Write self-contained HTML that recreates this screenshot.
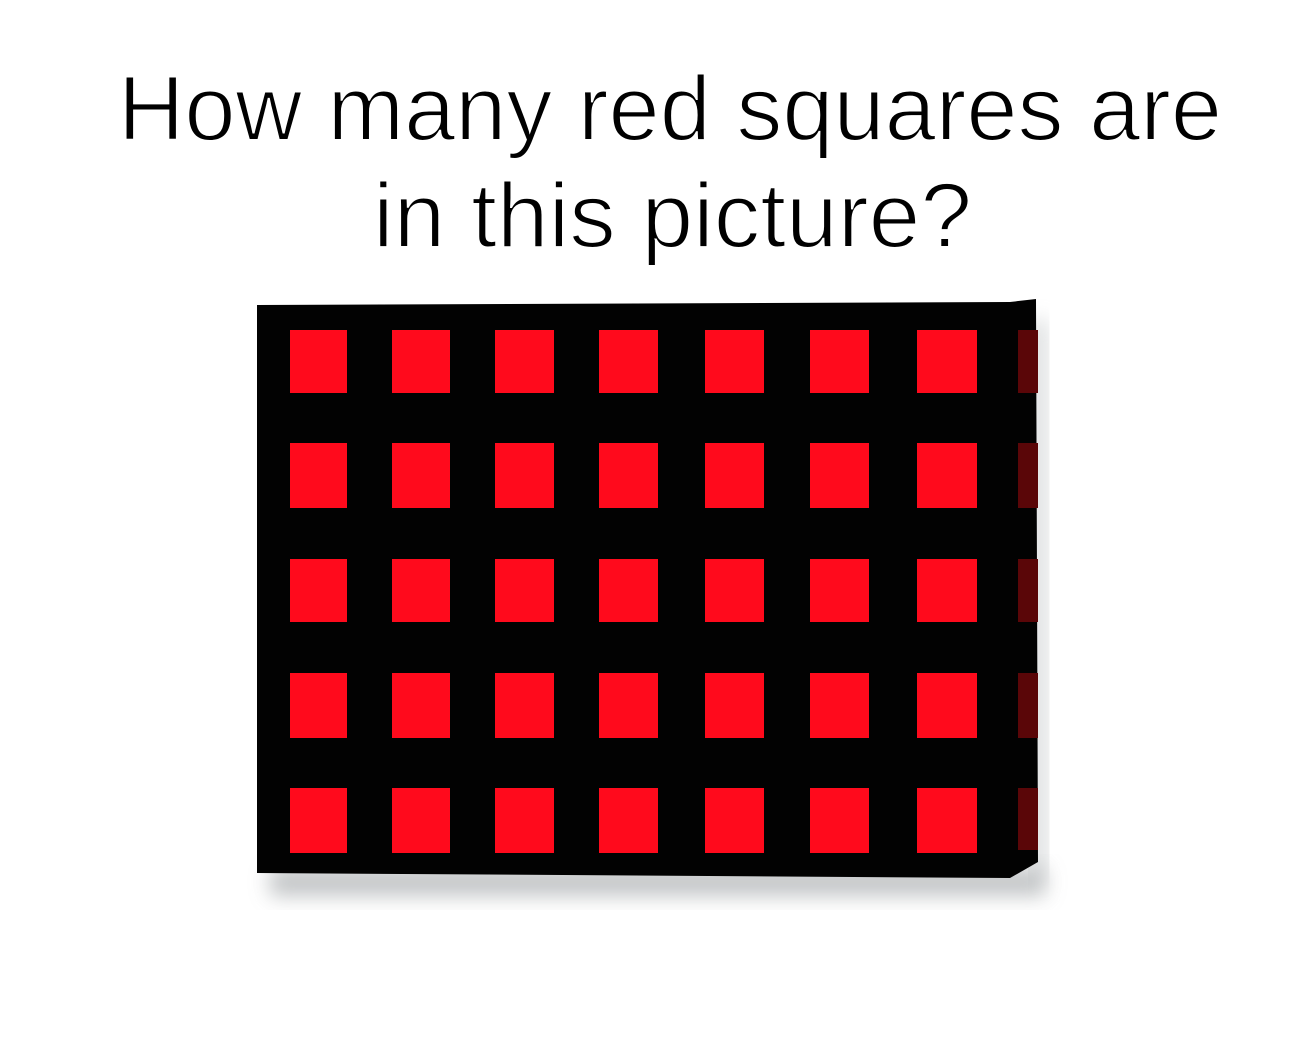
<!DOCTYPE html>
<html><head><style>
html,body{margin:0;padding:0;background:#fff;width:1297px;height:1046px;overflow:hidden}
</style></head><body>
<svg width="1297" height="1046" viewBox="0 0 1297 1046" xmlns="http://www.w3.org/2000/svg">
<defs>
<filter id="sh" x="-10%" y="-50%" width="130%" height="200%"><feGaussianBlur stdDeviation="10"/></filter>
</defs>
<g font-family="Liberation Sans, Arial, sans-serif" font-size="92" fill="#000" stroke="#fff" stroke-width="2">
<text x="118" y="140" textLength="1104" lengthAdjust="spacingAndGlyphs">How many red squares are</text>
<text x="373" y="247" textLength="599" lengthAdjust="spacingAndGlyphs">in this picture?</text>
</g>
<rect x="270" y="868" width="775" height="28" fill="#a8acae" filter="url(#sh)" opacity="0.7"/>
<rect x="1030" y="320" width="16" height="560" fill="#b8bcbe" filter="url(#sh)" opacity="0.6"/>
<polygon points="257,305 1010,302 1036,299 1038,862 1010,878 257,873" fill="#020202"/>
<g fill="#ff0a1c">
<rect x="290" y="330" width="57" height="63"/><rect x="392" y="330" width="58" height="63"/><rect x="495" y="330" width="59" height="63"/><rect x="599" y="330" width="59" height="63"/><rect x="705" y="330" width="59" height="63"/><rect x="810" y="330" width="59" height="63"/><rect x="917" y="330" width="60" height="63"/>
<rect x="290" y="443" width="57" height="65"/><rect x="392" y="443" width="58" height="65"/><rect x="495" y="443" width="59" height="65"/><rect x="599" y="443" width="59" height="65"/><rect x="705" y="443" width="59" height="65"/><rect x="810" y="443" width="59" height="65"/><rect x="917" y="443" width="60" height="65"/>
<rect x="290" y="559" width="57" height="63"/><rect x="392" y="559" width="58" height="63"/><rect x="495" y="559" width="59" height="63"/><rect x="599" y="559" width="59" height="63"/><rect x="705" y="559" width="59" height="63"/><rect x="810" y="559" width="59" height="63"/><rect x="917" y="559" width="60" height="63"/>
<rect x="290" y="673" width="57" height="65"/><rect x="392" y="673" width="58" height="65"/><rect x="495" y="673" width="59" height="65"/><rect x="599" y="673" width="59" height="65"/><rect x="705" y="673" width="59" height="65"/><rect x="810" y="673" width="59" height="65"/><rect x="917" y="673" width="60" height="65"/>
<rect x="290" y="788" width="57" height="65"/><rect x="392" y="788" width="58" height="65"/><rect x="495" y="788" width="59" height="65"/><rect x="599" y="788" width="59" height="65"/><rect x="705" y="788" width="59" height="65"/><rect x="810" y="788" width="59" height="65"/><rect x="917" y="788" width="60" height="65"/>
</g>
<g fill="#5a0608">
<rect x="1018" y="330" width="20" height="63"/><rect x="1018" y="443" width="20" height="65"/><rect x="1018" y="559" width="20" height="63"/><rect x="1018" y="673" width="20" height="65"/><rect x="1018" y="788" width="20" height="62"/>
</g>
</svg>
</body></html>
